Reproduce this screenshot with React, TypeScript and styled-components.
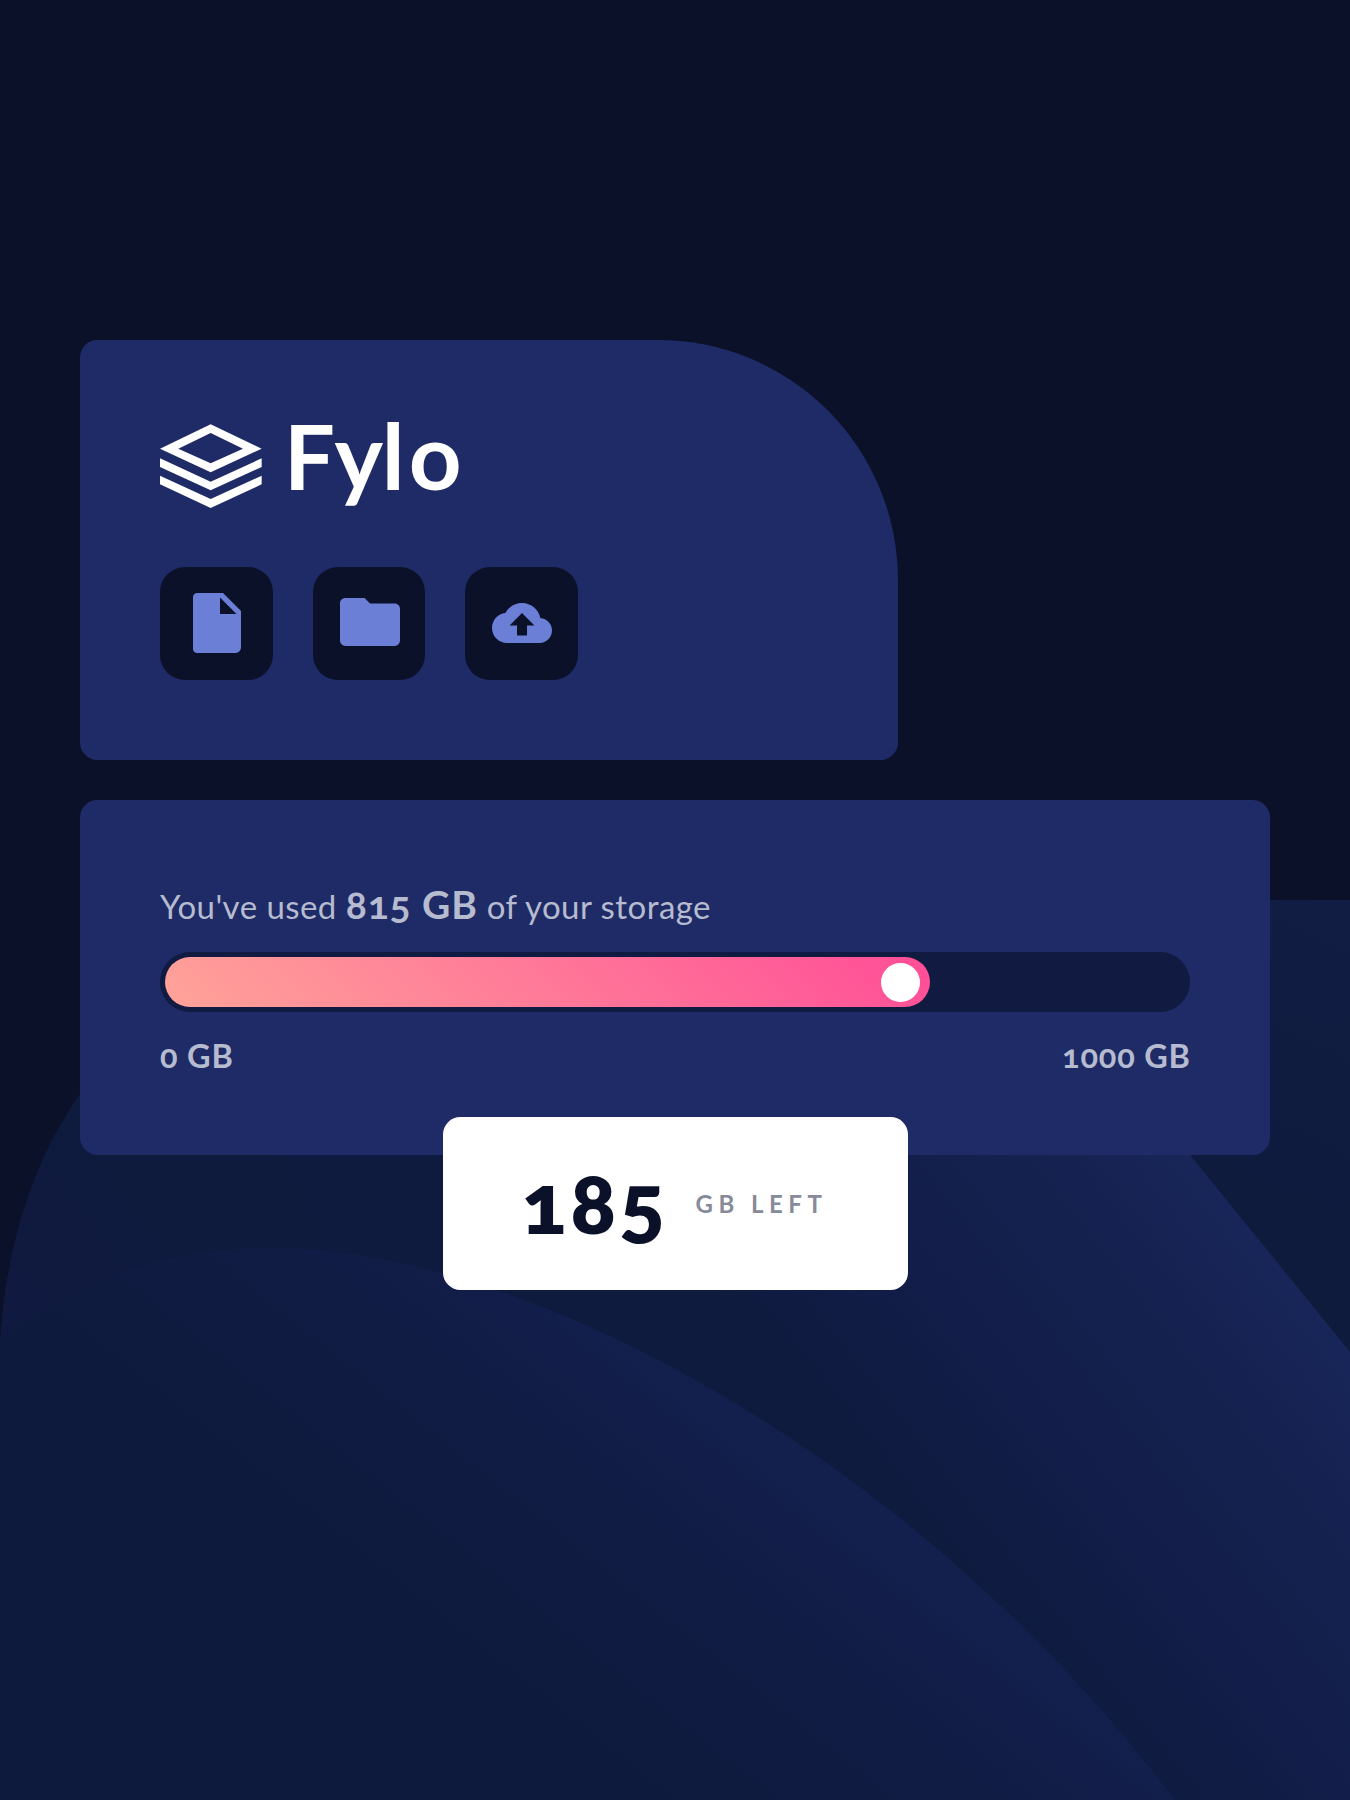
import React from "react";
import styled, { createGlobalStyle } from "styled-components";

const GlobalStyle = createGlobalStyle`
  * { box-sizing: border-box; }
  body {
    margin: 0;
    background: #0b1129;
    font-family: Lato, "Open Sans", sans-serif;
    font-variant-numeric: oldstyle-nums;
  }
`;

const Page = styled.main`
  position: relative;
  display: flex;
  flex-direction: column;
  gap: 40px;
  width: 1350px;
  height: 1800px;
  padding: 340px 80px 0;
  overflow: hidden;
`;

const Backdrop = styled.svg`
  position: absolute;
  left: 0;
  bottom: 0;
  width: 1350px;
  height: 901px;
`;

const Card = styled.section`
  position: relative;
  background: #1e2b66;
  border-radius: 17.5px;
  padding: 80px;
`;

const BrandCard = styled(Card)`
  width: 817.5px;
  height: 420px;
  border-top-right-radius: 240px;
`;

const Logo = styled.svg`
  display: block;
  width: 310px;
  height: 96px;
  overflow: visible;
  fill: #fff;
`;

const LogoText = styled.text`
  font-size: 92px;
  font-weight: 700;
`;

const Actions = styled.nav`
  display: flex;
  gap: 40px;
  margin-top: 51.4px;
`;

const ActionButton = styled.button`
  display: flex;
  align-items: center;
  justify-content: center;
  width: 112.5px;
  height: 112.5px;
  padding: 0 0 2px 1.5px;
  border: 0;
  border-radius: 25px;
  background: #0b1129;
`;

const Icon = styled.svg<{ $w: number; $h: number }>`
  width: ${(p) => p.$w}px;
  height: ${(p) => p.$h}px;
  fill: #6b7fd7;
`;

const UsageGroup = styled.div`
  display: flex;
  flex-direction: column;
`;

const UsageCard = styled(Card)`
  height: 355px;
  padding-top: 78.5px;
  color: #b7bbd0;
`;

const Usage = styled.p`
  height: 50px;
  margin: 0;
  line-height: 50px;
  font-size: 33px;
  font-weight: 400;
  letter-spacing: 0.45px;
  white-space: nowrap;
`;

const Used = styled.strong`
  font-size: 39px;
  font-weight: 700;
  letter-spacing: 0.9px;
`;

const Track = styled.div`
  display: flex;
  height: 60px;
  margin-top: 23.9px;
  padding: 5px;
  border-radius: 30px;
  background: #111a40;
`;

const Fill = styled.div`
  display: flex;
  align-items: center;
  justify-content: flex-end;
  width: 75%;
  height: 50px;
  padding-right: 10.5px;
  border-radius: 25px;
  background: linear-gradient(45deg, #ffa399, #ff4d97);
`;

const Knob = styled.span`
  width: 39px;
  height: 39px;
  border-radius: 50%;
  background: #fff;
`;

const Scale = styled.div`
  display: flex;
  justify-content: space-between;
  margin-top: 23.6px;
  line-height: 40px;
  font-size: 32.5px;
  font-weight: 700;
`;

const ScaleMark = styled.span`
  letter-spacing: 0.8px;

  &:last-child {
    margin-right: -0.8px;
  }
`;

const Remaining = styled.aside`
  position: relative;
  display: flex;
  align-items: center;
  align-self: center;
  width: 465px;
  height: 173px;
  margin-top: -38px;
  padding-left: 79px;
  border-radius: 17.5px;
  background: #fff;
`;

const Amount = styled.strong`
  width: 174px;
  padding-bottom: 4px;
  color: #0b1129;
  font-size: 84px;
  font-weight: 800;
  line-height: 96px;
  letter-spacing: 3.6px;
`;

const Unit = styled.span`
  color: #868a99;
  font-size: 24px;
  font-weight: 700;
  letter-spacing: 5.5px;
  white-space: nowrap;
`;

export default function App() {
  return (
    <>
      <GlobalStyle />
      <Page>
        <Backdrop viewBox="0 899 1350 901" aria-hidden="true">
          <defs>
            <linearGradient id="base" gradientUnits="userSpaceOnUse" x1="1350" y1="900" x2="1210" y2="1200">
              <stop offset="0" stopColor="#111d43" />
              <stop offset="1" stopColor="#0e1b3d" />
            </linearGradient>
            <linearGradient id="left" gradientUnits="userSpaceOnUse" x1="0" y1="1270" x2="130" y2="1170">
              <stop offset="0" stopColor="#10193f" />
              <stop offset="1" stopColor="#10193f" stopOpacity="0" />
            </linearGradient>
            <linearGradient id="band" gradientUnits="userSpaceOnUse" x1="1270" y1="1254" x2="910" y2="1540">
              <stop offset="0" stopColor="#182558" />
              <stop offset="0.35" stopColor="#14204d" />
              <stop offset="0.62" stopColor="#121d49" />
              <stop offset="0.82" stopColor="#101c43" />
              <stop offset="1" stopColor="#0e1b3e" />
            </linearGradient>
            <linearGradient id="hill" gradientUnits="userSpaceOnUse" x1="900" y1="1485" x2="660" y2="1787">
              <stop offset="0" stopColor="#132150" />
              <stop offset="0.28" stopColor="#121d49" />
              <stop offset="0.58" stopColor="#101c43" />
              <stop offset="1" stopColor="#0e1a3d" />
            </linearGradient>
          </defs>
          <path fill="url(#base)" d="M0 1350C4 1254 31 1164 80 1094C150 990 230 930 310 900H1350V1800H0Z" />
          <path fill="url(#left)" d="M0 1350C4 1254 31 1164 80 1094L300 1094V1350Z" />
          <path fill="url(#band)" d="M250 1094C500 900 970 880 1190 1155L1350 1352V1800H600Z" />
          <path fill="url(#hill)" d="M0 1340C80 1275 170 1248 275 1248C520 1248 910 1450 1175 1800H0Z" />
        </Backdrop>

        <BrandCard>
          <Logo viewBox="0 0 310 96" role="img" aria-label="Fylo">
            <g transform="translate(-20 -20) scale(.33333)">
              <path
                fillRule="evenodd"
                d="M60 146L212 73L365 146L212 217ZM115 146L212 190L309 146L212 99ZM60 175L212 245L365 175V201L212 271L60 201ZM60 227L212 297L365 227V253L212 324L60 253Z"
              />
            </g>
            <LogoText y="69.5">
              <tspan x="124" fontSize="90">F</tspan>
              <tspan x="174.5 221.8 248.8">ylo</tspan>
            </LogoText>
          </Logo>
          <Actions>
            <ActionButton aria-label="Documents">
              <Icon $w={48} $h={60} viewBox="4 2 16 20">
                <path d="M5.4 2C4.6 2 4 2.6 4 3.4V20.6C4 21.4 4.6 22 5.4 22H18.2C19.2 22 20 21.2 20 20.2V8L14 2ZM13 9V3.5L18.5 9Z" />
              </Icon>
            </ActionButton>
            <ActionButton aria-label="Folders">
              <Icon $w={60} $h={49} viewBox="2 4 20 16.33">
                <path d="M10.2 4H3.8C2.8 4 2 4.8 2 5.8V18.2C2 19.2 2.8 20 3.8 20H20.2C21.2 20 22 19.2 22 18.2V7.6C22 6.6 21.2 5.8 20.2 5.8H12Z" />
              </Icon>
            </ActionButton>
            <ActionButton aria-label="Upload">
              <Icon $w={60} $h={40} viewBox="0 4 24 16">
                <path d="M19.35 10.04C18.67 6.59 15.64 4 12 4 9.11 4 6.6 5.64 5.35 8.04 2.34 8.36 0 10.91 0 14c0 3.31 2.69 6 6 6h13c2.76 0 5-2.24 5-5 0-2.64-2.05-4.78-4.65-4.96zM14 13v4h-4v-4H7l5-5 5 5h-3z" />
              </Icon>
            </ActionButton>
          </Actions>
        </BrandCard>

        <UsageGroup>
          <UsageCard>
            <Usage>
              You've used <Used>815 GB</Used> of your storage
            </Usage>
            <Track>
              <Fill>
                <Knob />
              </Fill>
            </Track>
            <Scale>
              <ScaleMark>0 GB</ScaleMark>
              <ScaleMark>1000 GB</ScaleMark>
            </Scale>
          </UsageCard>
          <Remaining>
            <Amount>185</Amount>
            <Unit>GB LEFT</Unit>
          </Remaining>
        </UsageGroup>
      </Page>
    </>
  );
}
